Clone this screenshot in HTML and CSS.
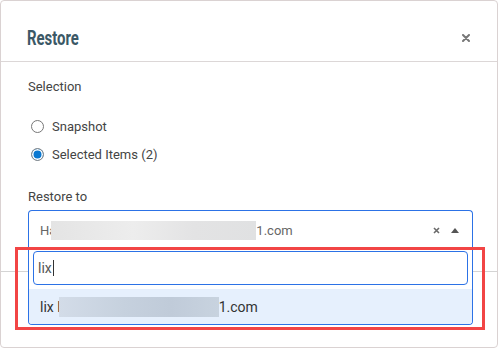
FILE: index.html
```html
<!DOCTYPE html>
<html>
<head>
    <title>Restore</title>
    <link rel="stylesheet" href="styles.css">
</head>
<body>
    <div class="modal">
        <div class="modal-header">
            <h3 class="title">Restore</h3>
            <span class="close">
                <svg width="8" height="8" viewBox="0 0 8 8"><path d="M1 1L7 7M7 1L1 7" stroke="#777" stroke-width="2" stroke-linecap="round"/></svg>
            </span>
        </div>
        <div class="modal-body">
            <div class="label">Selection</div>
            <div class="radios">
                <label class="radio-row"><span class="radio"></span>Snapshot</label>
                <label class="radio-row"><span class="radio checked"></span>Selected Items (2)</label>
            </div>
            <div class="label target">Restore to</div>
            <div class="select">
                <div class="select-control">
                    <span class="value">Ha<span class="redact gray"></span>1.com</span>
                    <span class="clear">
                        <svg width="7" height="7" viewBox="0 0 7 7"><path d="M1 1L6 6M6 1L1 6" stroke="#6a6a6a" stroke-width="1.6"/></svg>
                    </span>
                    <span class="arrow"></span>
                </div>
                <div class="select-menu">
                    <div class="search">lix<span class="caret"></span></div>
                    <div class="option">lix l<span class="redact blue"></span>1.com</div>
                </div>
            </div>
        </div>
        <div class="modal-footer"></div>
        <div class="highlight"></div>
    </div>
</body>
</html>
```

FILE: styles.css
```css
body {
    margin: 0;
    font-family: Roboto, "Noto Sans", sans-serif;
    color: #444;
}
.modal {
    position: relative;
    box-sizing: border-box;
    width: 498px;
    height: 348px;
    border: 1px solid #dad2d2;
    border-radius: 4px;
    background: #fff;
    display: flex;
    flex-direction: column;
}
.modal-header {
    height: 61px;
    border-bottom: 1px solid #dcd7d7;
    display: flex;
    align-items: center;
    justify-content: space-between;
    padding: 14px 27px 0 26px;
    box-sizing: border-box;
}
.title {
    margin: 0;
    font-family: Roboto, sans-serif;
    font-weight: bold;
    font-size: 21px;
    color: #3b5866;
    transform: scaleX(0.71);
    transform-origin: left center;
}
.close {
    display: flex;
}
.modal-body {
    padding: 16px 24px 21px 27px;
}
.label {
    font-size: 13px;
    line-height: 18px;
    color: #444;
}
.radios {
    margin-top: 16px;
}
.radio-row {
    display: flex;
    align-items: center;
    height: 28px;
    font-size: 13px;
    color: #444;
}
.radio {
    box-sizing: border-box;
    width: 13px;
    height: 13px;
    border: 1px solid #777;
    border-radius: 50%;
    margin: 0 8px 0 3px;
    background: #fff;
}
.radio.checked {
    background: #0a78d1;
    box-shadow: inset 0 0 0 1.5px #fff;
    border-color: #888;
}
.target {
    margin-top: 20px;
    margin-bottom: 4px;
}
.select {
    position: relative;
}
.select-control {
    box-sizing: border-box;
    height: 40px;
    border: 1px solid #2c72e6;
    border-bottom: none;
    border-radius: 4px 4px 0 0;
    display: flex;
    align-items: center;
    padding: 0 13px 0 11px;
    font-size: 13px;
    color: #666;
}
.value {
    flex: 1;
    display: flex;
    align-items: center;
}
.redact {
    display: inline-block;
    height: 19px;
}
.redact.gray {
    width: 205px;
    margin-left: -5px;
    background: linear-gradient(90deg, #e4e4e4, #ededed 40%, #e3e3e4 70%, #e0e1e2);
}
.redact.blue {
    width: 160px;
    height: 20px;
    margin-left: -2px;
    background: linear-gradient(90deg, #d3dce8, #c6d1de 40%, #c0cbd9 70%, #c8d3df);
}
.clear {
    display: flex;
    margin-right: 11px;
}
.arrow {
    width: 0;
    height: 0;
    border-left: 4px solid transparent;
    border-right: 4px solid transparent;
    border-bottom: 5px solid #555;
}
.select-menu {
    position: absolute;
    top: 100%;
    left: 0;
    right: 0;
    z-index: 2;
    background: #fff;
    border: 1px solid #2c72e6;
    border-top: none;
    border-radius: 0 0 4px 4px;
    padding: 1px 4px 0 4px;
    overflow: hidden;
}
.search {
    box-sizing: border-box;
    height: 34px;
    border: 1px solid #2c72e6;
    border-radius: 4px;
    padding-left: 4px;
    display: flex;
    align-items: center;
    font-size: 14px;
    color: #555;
}
.caret {
    width: 1px;
    height: 16px;
    background: #333;
    margin-left: 1px;
}
.option {
    margin: 4px -4px 0 -4px;
    height: 35px;
    background: #e6f0fd;
    display: flex;
    align-items: center;
    padding-left: 11px;
    font-size: 14px;
    color: #333;
}
.modal-footer {
    flex: 1;
    border-top: 1px solid #d4d4d4;
}
.highlight {
    position: absolute;
    left: 14px;
    top: 246px;
    width: 470px;
    height: 83px;
    box-sizing: border-box;
    border: 3px solid #f24545;
    z-index: 3;
}
```
